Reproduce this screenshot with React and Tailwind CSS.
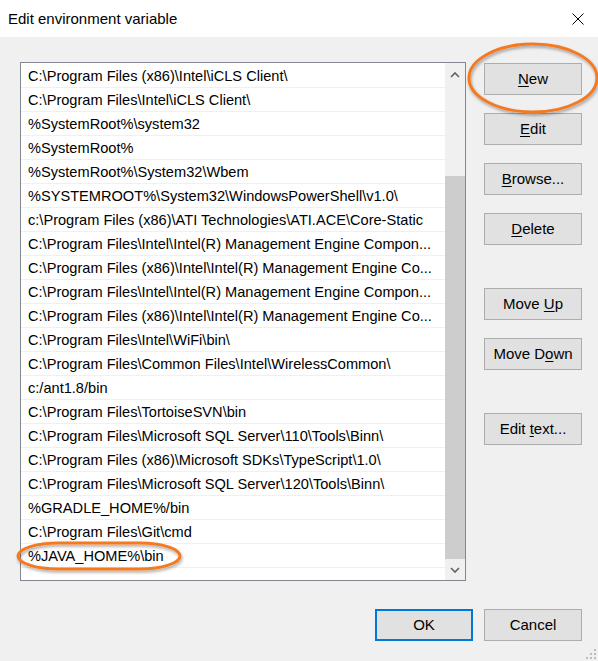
import React from "react";

const paths = [
  "C:\\Program Files (x86)\\Intel\\iCLS Client\\",
  "C:\\Program Files\\Intel\\iCLS Client\\",
  "%SystemRoot%\\system32",
  "%SystemRoot%",
  "%SystemRoot%\\System32\\Wbem",
  "%SYSTEMROOT%\\System32\\WindowsPowerShell\\v1.0\\",
  "c:\\Program Files (x86)\\ATI Technologies\\ATI.ACE\\Core-Static",
  "C:\\Program Files\\Intel\\Intel(R) Management Engine Compon...",
  "C:\\Program Files (x86)\\Intel\\Intel(R) Management Engine Co...",
  "C:\\Program Files\\Intel\\Intel(R) Management Engine Compon...",
  "C:\\Program Files (x86)\\Intel\\Intel(R) Management Engine Co...",
  "C:\\Program Files\\Intel\\WiFi\\bin\\",
  "C:\\Program Files\\Common Files\\Intel\\WirelessCommon\\",
  "c:/ant1.8/bin",
  "C:\\Program Files\\TortoiseSVN\\bin",
  "C:\\Program Files\\Microsoft SQL Server\\110\\Tools\\Binn\\",
  "C:\\Program Files (x86)\\Microsoft SDKs\\TypeScript\\1.0\\",
  "C:\\Program Files\\Microsoft SQL Server\\120\\Tools\\Binn\\",
  "%GRADLE_HOME%/bin",
  "C:\\Program Files\\Git\\cmd",
  "%JAVA_HOME%\\bin",
];

// label split: before, access key, after
function Btn({ pre = "", k, post = "", className = "", primary = false }) {
  return (
    <button
      className={
        "w-[98px] h-[32px] bg-[#e1e1e1] text-[15px] text-black flex items-center justify-center " +
        (primary ? "border-2 border-[#0078d7] " : "border border-[#adadad] ") +
        className
      }
    >
      <span>
        {pre}
        {k && <span className="underline underline-offset-2">{k}</span>}
        {post}
      </span>
    </button>
  );
}

export default function App() {
  return (
    <div
      className="relative w-[598px] h-[661px] bg-[#f0f0f0] overflow-hidden"
      style={{ fontFamily: '"Liberation Sans", Arial, sans-serif' }}
    >
      {/* title bar */}
      <div className="h-[37px] bg-white flex items-center justify-between pl-2 pr-[14px]">
        <span className="text-[15px] text-black pt-[1px]">Edit environment variable</span>
        <svg width="12" height="12" viewBox="0 0 12 12">
          <path d="M0.5 0.5 L11.5 11.5 M11.5 0.5 L0.5 11.5" stroke="#000" strokeWidth="1" />
        </svg>
      </div>

      <div className="flex pl-5 pt-[25px]">
        {/* list box */}
        <div className="w-[446px] h-[519px] border border-[#828790] bg-white flex">
          <div className="flex-1 flex flex-col pt-[1px]">
            {paths.map((p, i) => (
              <div
                key={i}
                className="h-[24px] border-b border-[#f0f0f0] pl-[7px] pt-[3px] flex items-center text-[14.6px] text-black whitespace-nowrap overflow-hidden"
              >
                {p}
              </div>
            ))}
          </div>
          <div className="w-[20px] bg-[#f0f0f0] flex flex-col">
            <div className="h-[24px] flex items-center justify-center">
              <svg width="10" height="6" viewBox="0 0 10 6">
                <path d="M1 5 L5 1 L9 5" stroke="#606060" strokeWidth="1.6" fill="none" />
              </svg>
            </div>
            <div className="h-[89px]" />
            <div className="h-[383px] bg-[#cdcdcd]" />
            <div className="flex-1 flex items-center justify-center">
              <svg width="10" height="6" viewBox="0 0 10 6">
                <path d="M1 1 L5 5 L9 1" stroke="#606060" strokeWidth="1.6" fill="none" />
              </svg>
            </div>
          </div>
        </div>

        {/* side buttons */}
        <div className="ml-[18px] pt-[1px] flex flex-col">
          <Btn k="N" post="ew" />
          <Btn k="E" post="dit" className="mt-[18px]" />
          <Btn k="B" post="rowse..." className="mt-[18px]" />
          <Btn k="D" post="elete" className="mt-[18px]" />
          <Btn pre="Move " k="U" post="p" className="mt-[43px]" />
          <Btn pre="Move D" k="o" post="wn" className="mt-[18px]" />
          <Btn pre="Edit " k="t" post="ext..." className="mt-[43px]" />
        </div>
      </div>

      {/* bottom buttons */}
      <div className="flex justify-end gap-[11px] pr-4 pt-[28px]">
        <Btn pre="OK" primary className="w-[97px]" />
        <Btn pre="Cancel" />
      </div>

      {/* size grip */}
      <svg className="absolute right-[1px] bottom-[1px]" width="12" height="12" viewBox="0 0 12 12">
        {[
          [9, 1],
          [5, 5],
          [9, 5],
          [1, 9],
          [5, 9],
          [9, 9],
        ].map(([x, y], i) => (
          <rect key={i} x={x} y={y} width="2" height="2" fill="#bcbcbc" />
        ))}
      </svg>

      {/* orange highlight annotations */}
      <svg className="absolute left-0 top-0 pointer-events-none" width="598" height="661">
        <defs>
          <filter id="sh" x="-10%" y="-20%" width="120%" height="140%">
            <feDropShadow dx="1" dy="2" stdDeviation="1.5" floodColor="#000" floodOpacity="0.35" />
          </filter>
        </defs>
        <ellipse cx="533" cy="78" rx="64" ry="34" stroke="#f47a20" strokeWidth="3" fill="none" filter="url(#sh)" />
        <rect x="18" y="543" width="162" height="26" rx="40" ry="13" stroke="#f47a20" strokeWidth="3" fill="none" filter="url(#sh)" />
      </svg>
    </div>
  );
}
